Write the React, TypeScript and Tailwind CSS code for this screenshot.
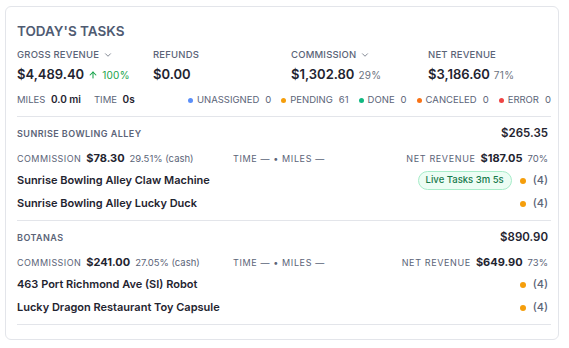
import { ChevronDown, ArrowUp } from "lucide-react";

type Item = { name: string; live?: string };
type Location = {
  name: string;
  total: string;
  commission: string;
  commissionPct: string;
  net: string;
  netPct: string;
  items: Item[];
};

const locations: Location[] = [
  {
    name: "Sunrise Bowling Alley",
    total: "$265.35",
    commission: "$78.30",
    commissionPct: "29.51% (cash)",
    net: "$187.05",
    netPct: "70%",
    items: [
      { name: "Sunrise Bowling Alley Claw Machine", live: "Live Tasks 3m 5s" },
      { name: "Sunrise Bowling Alley Lucky Duck" },
    ],
  },
  {
    name: "Botanas",
    total: "$890.90",
    commission: "$241.00",
    commissionPct: "27.05% (cash)",
    net: "$649.90",
    netPct: "73%",
    items: [
      { name: "463 Port Richmond Ave (SI) Robot" },
      { name: "Lucky Dragon Restaurant Toy Capsule" },
    ],
  },
];

const statuses = [
  { label: "Unassigned", count: 0, dot: "bg-[#5b8ff9]" },
  { label: "Pending", count: 61, dot: "bg-[#f59e0b]" },
  { label: "Done", count: 0, dot: "bg-[#10b981]" },
  { label: "Canceled", count: 0, dot: "bg-[#f97316]" },
  { label: "Error", count: 0, dot: "bg-[#ef4444]" },
];

function Stat({ label, value, pct, chevron, up }: { label: string; value: string; pct: string; chevron?: boolean; up?: boolean }) {
  return (
    <div className="flex flex-col">
      <div className="flex h-3 items-center gap-1 text-[9.5px] font-medium uppercase tracking-[0.02em] text-[#5b6478]">
        {label}
        {chevron && <ChevronDown size={10} strokeWidth={2} className="text-[#6b7280]" />}
      </div>
      <div className="mt-1 flex h-5 items-baseline gap-1">
        <span className="text-[13px] font-semibold text-[#1f2430]">{value}</span>
        {up && <ArrowUp size={10} strokeWidth={2.5} className="self-center text-[#16a34a]" />}
        {pct && <span className={"text-[10px] tracking-[0.03em] " + (up ? "text-[#16a34a]" : "text-[#6b7280]")}>{pct}</span>}
      </div>
    </div>
  );
}

export default function App() {
  return (
    <div className="h-[348px] w-[569px] bg-white pt-[6px] pl-[5px] font-['Inter',sans-serif]">
      <div className="w-[554px] rounded-md border border-[#e3e5ea] pt-3 pr-[7px] pb-[14px] pl-[11px]">
        <h2 className="h-6 text-[13.5px] leading-6 font-semibold text-[#4f5b72]">TODAY'S TASKS</h2>

        <div className="mt-[6px] grid grid-cols-[136px_138px_137px_1fr]">
          <Stat label="Gross Revenue" value="$4,489.40" pct="100%" chevron up />
          <Stat label="Refunds" value="$0.00" pct="" />
          <Stat label="Commission" value="$1,302.80" pct="29%" chevron />
          <Stat label="Net Revenue" value="$3,186.60" pct="71%" />
        </div>

        <div className="mt-2 flex h-[14px] items-center justify-between text-[9.5px] uppercase text-[#5b6478]">
          <div className="flex items-center gap-[13px]">
            <span>
              Miles <span className="ml-[3px] text-[10px] font-semibold text-[#1f2430] normal-case">0.0 mi</span>
            </span>
            <span>
              Time <span className="ml-[3px] text-[10px] font-semibold text-[#1f2430] normal-case">0s</span>
            </span>
          </div>
          <div className="flex items-center gap-[10px]">
            {statuses.map((s) => (
              <span key={s.label} className="flex items-center">
                <span className={"mr-[4px] h-[5px] w-[5px] rounded-full " + s.dot} />
                {s.label}
                <span className="ml-[6px]">{s.count}</span>
              </span>
            ))}
          </div>
        </div>

        <div className="mt-[9px] border-t border-[#e3e5ea]" />

        {locations.map((loc) => (
          <div key={loc.name} className="border-b border-[#e3e5ea] pt-[9px] pr-[3px] pb-[5px]">
            <div className="flex h-[16px] items-center justify-between">
              <span className="text-[9px] font-semibold uppercase tracking-[0.05em] text-[#5b6478]">{loc.name}</span>
              <span className="text-[11.5px] font-semibold text-[#1f2430]">{loc.total}</span>
            </div>
            <div className="mt-[8px] grid h-[16px] grid-cols-[216px_1fr_auto] items-center text-[9px] tracking-[0.05em] text-[#5b6478]">
              <div className="flex items-baseline">
                <span className="uppercase">Commission</span>
                <span className="ml-[5px] text-[11px] font-bold tracking-normal text-[#1f2430]">{loc.commission}</span>
                <span className="ml-[5px] text-[9.5px] tracking-normal">{loc.commissionPct}</span>
              </div>
              <div className="uppercase tracking-[0.07em]">Time — • Miles —</div>
              <div className="flex items-baseline">
                <span className="uppercase tracking-[0.07em]">Net Revenue</span>
                <span className="ml-[5px] text-[11px] font-bold tracking-normal text-[#1f2430]">{loc.net}</span>
                <span className="ml-[5px] text-[9.5px] tracking-normal">{loc.netPct}</span>
              </div>
            </div>
            <div className="mt-[3px] flex flex-col">
              {loc.items.map((it) => (
                <div key={it.name} className="flex h-[23px] items-center justify-between">
                  <span className="text-[11px] font-semibold text-[#1f2430]">{it.name}</span>
                  <div className="flex items-center">
                    {it.live && (
                      <span className="mr-[8px] rounded-full border border-[#a7ecc9] bg-[#ecfdf4] px-[7px] py-[1px] text-[9.5px] font-medium text-[#16794a]">
                        {it.live}
                      </span>
                    )}
                    <span className="mr-[7px] h-[6px] w-[6px] rounded-full bg-[#f59e0b]" />
                    <span className="text-[11px] font-medium text-[#5b6478]">(4)</span>
                  </div>
                </div>
              ))}
            </div>
          </div>
        ))}
      </div>
    </div>
  );
}
